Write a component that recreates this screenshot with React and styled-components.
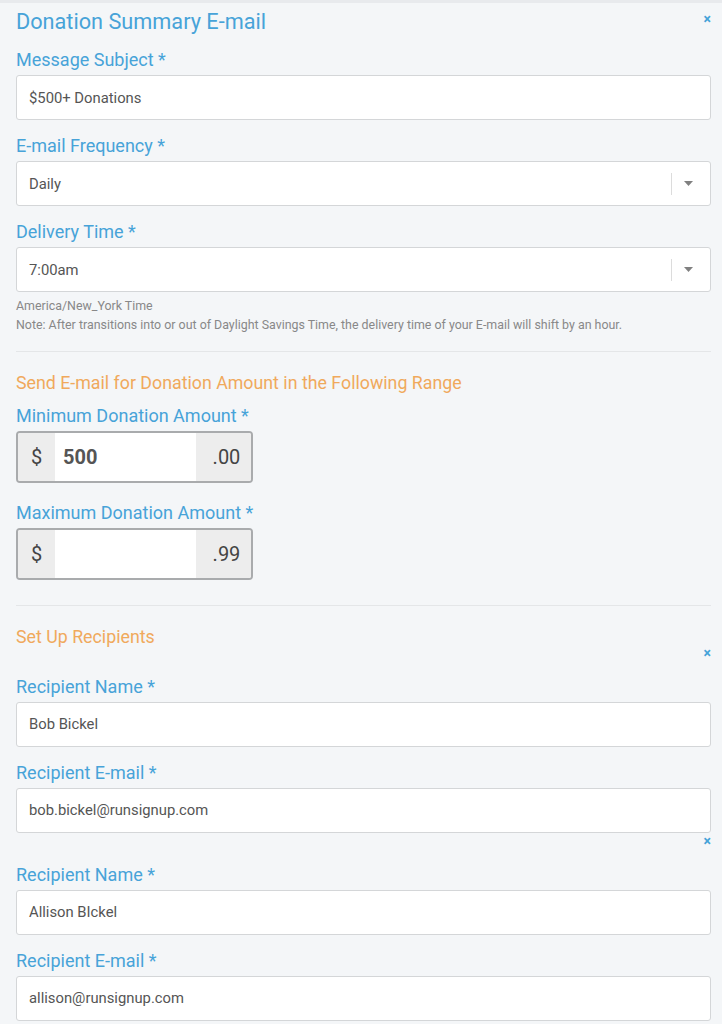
import React from "react";
import styled, { createGlobalStyle } from "styled-components";

const GlobalStyle = createGlobalStyle`
  html, body {
    margin: 0;
    padding: 0;
    background: #f4f6f8;
  }
  body {
    font-family: Roboto, "Liberation Sans", Arial, sans-serif;
  }
  * { box-sizing: border-box; }
`;

export default function App() {
  return (
    <>
      <GlobalStyle />
      <Page>
        <HeaderRow>
          <Title>Donation Summary E-mail</Title>
          <Close>×</Close>
        </HeaderRow>

        <Field>
          <Label>Message Subject *</Label>
          <TextBox>$500+ Donations</TextBox>
        </Field>

        <Field>
          <Label>E-mail Frequency *</Label>
          <SelectBox>
            <span>Daily</span>
            <Caret />
          </SelectBox>
        </Field>

        <Field>
          <Label>Delivery Time *</Label>
          <SelectBox>
            <span>7:00am</span>
            <Caret />
          </SelectBox>
          <Help>
            <div>America/New_York Time</div>
            <div>Note: After transitions into or out of Daylight Savings Time, the delivery time of your E-mail will shift by an hour.</div>
          </Help>
        </Field>

        <Divider $top={17} />

        <SectionTitle $top={20}>Send E-mail for Donation Amount in the Following Range</SectionTitle>

        <Field $top={0}>
          <Label>Minimum Donation Amount *</Label>
          <MoneyGroup>
            <Addon>$</Addon>
            <MoneyInput $bold>500</MoneyInput>
            <Addon $right>.00</Addon>
          </MoneyGroup>
        </Field>

        <Field $top={8}>
          <Label>Maximum Donation Amount *</Label>
          <MoneyGroup>
            <Addon>$</Addon>
            <MoneyInput />
            <Addon $right>.99</Addon>
          </MoneyGroup>
        </Field>

        <Divider $top={25} />

        <SectionTitle $top={20}>Set Up Recipients</SectionTitle>

        <Recipient>
          <RemoveRow $top={-4}><Close>×</Close></RemoveRow>
          <Field $top={13}>
            <Label>Recipient Name *</Label>
            <TextBox>Bob Bickel</TextBox>
          </Field>
          <Field>
            <Label>Recipient E-mail *</Label>
            <TextBox>bob.bickel@runsignup.com</TextBox>
          </Field>
        </Recipient>

        <Recipient>
          <RemoveRow $top={-1}><Close>×</Close></RemoveRow>
          <Field $top={13}>
            <Label>Recipient Name *</Label>
            <TextBox>Allison BIckel</TextBox>
          </Field>
          <Field>
            <Label>Recipient E-mail *</Label>
            <TextBox>allison@runsignup.com</TextBox>
          </Field>
        </Recipient>
      </Page>
    </>
  );
}

function Caret() {
  return (
    <CaretWrap>
      <Sep />
      <svg width="9" height="5" viewBox="0 0 9 5">
        <path d="M0 0 L9 0 L4.5 5 Z" fill="#808080" />
      </svg>
    </CaretWrap>
  );
}

const Page = styled.div`
  border-top: 3px solid #e8eaed;
  padding: 7px 11px 0 16px;
  min-height: 1024px;
  display: flex;
  flex-direction: column;
`;

const HeaderRow = styled.div`
  display: flex;
  align-items: flex-start;
  justify-content: space-between;
`;

const Title = styled.h1`
  margin: 0;
  font-weight: 400;
  font-size: 21.7px;
  line-height: 24px;
  color: #47a3d8;
`;

const Close = styled.span`
  color: #47a3d8;
  font-size: 14px;
  font-weight: 700;
  line-height: 14px;
  margin-top: 2px;
`;

const Field = styled.div`
  display: flex;
  flex-direction: column;
  margin-top: ${(p) => p.$top ?? 4}px;
`;

const Label = styled.label`
  font-size: 18px;
  line-height: 22px;
  color: #47a3d8;
  padding: 11px 0 4px;
`;

const TextBox = styled.div`
  height: 45px;
  background: #fff;
  border: 1px solid #d4d6d8;
  border-radius: 3px;
  padding: 0 12px;
  display: flex;
  align-items: center;
  font-size: 14.8px;
  color: #555;
`;

const SelectBox = styled(TextBox)`
  justify-content: space-between;
  padding-right: 17px;
`;

const CaretWrap = styled.div`
  display: flex;
  align-items: center;
  height: 100%;
`;

const Sep = styled.div`
  width: 1px;
  height: 22px;
  background: #dcdcdc;
  margin-right: 12px;
`;

const Help = styled.div`
  margin-top: 3.5px;
  font-size: 12.4px;
  line-height: 19px;
  color: #888;
`;

const Divider = styled.hr`
  width: 100%;
  border: none;
  border-top: 1px solid #e4e6e8;
  margin: ${(p) => p.$top}px 0 0;
`;

const SectionTitle = styled.h2`
  margin: ${(p) => p.$top}px 0 0;
  font-size: 17.8px;
  line-height: 22px;
  font-weight: 400;
  color: #f0a95c;
`;

const MoneyGroup = styled.div`
  width: 237px;
  height: 52px;
  display: flex;
  border: 2px solid #a9abad;
  border-radius: 4px;
  overflow: hidden;
  background: #fff;
`;

const Addon = styled.div`
  width: ${(p) => (p.$right ? "55px" : "37px")};
  background: #ededed;
  display: flex;
  align-items: center;
  justify-content: center;
  font-size: 20px;
  color: #444;
  padding-left: ${(p) => (p.$right ? "6px" : "0")};
`;

const MoneyInput = styled.div`
  flex: 1;
  background: #fff;
  display: flex;
  align-items: center;
  padding-left: 8px;
  font-size: 20px;
  font-weight: ${(p) => (p.$bold ? 700 : 400)};
  color: #555;
`;

const Recipient = styled.div`
  display: flex;
  flex-direction: column;
`;

const RemoveRow = styled.div`
  display: flex;
  justify-content: flex-end;
  height: 8px;
  margin-top: ${(p) => p.$top}px;
`;
